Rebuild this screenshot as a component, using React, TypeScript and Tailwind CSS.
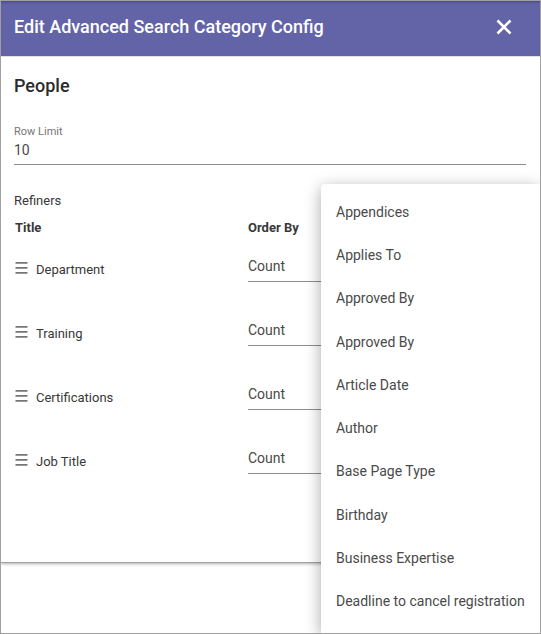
import { useState } from "react";

const refiners = ["Department", "Training", "Certifications", "Job Title"];

const properties = [
  "Appendices",
  "Applies To",
  "Approved By",
  "Approved By",
  "Article Date",
  "Author",
  "Base Page Type",
  "Birthday",
  "Business Expertise",
  "Deadline to cancel registration",
];

function CloseIcon() {
  return (
    <svg viewBox="0 0 24 24" className="size-6" fill="none" stroke="currentColor" strokeWidth="2.600" aria-hidden="true">
      <path d="M5.500 5.500l13 13M18.500 5.500l-13 13" />
    </svg>
  );
}

function DragIcon() {
  return (
    <svg viewBox="0 0 13 12" className="h-3 w-[13px]" fill="currentColor" aria-hidden="true">
      <path d="M.5 0h12v1.700h-12zM.5 5h12v1.700h-12zM.5 10h12v1.700h-12z" />
    </svg>
  );
}

function RefinerRow({ title }: { title: string }) {
  return (
    <tr className="h-16">
      <td className="p-0">
        <div className="flex items-center gap-2 pl-px">
          <button type="button" aria-label={`Move ${title}`} className="pb-1 text-[#757575]">
            <DragIcon />
          </button>
          <span>{title}</span>
        </div>
      </td>
      <td className="p-0 pb-2">
        <select
          aria-label={`Order ${title} by`}
          className="block h-8 w-full appearance-none border-b border-[#8c8c8c] bg-transparent text-sm leading-5 text-[#4a4a4a] outline-none"
        >
          <option>Count</option>
        </select>
      </td>
    </tr>
  );
}

function PropertyMenu() {
  return (
    <ul
      role="listbox"
      aria-label="Properties"
      className="absolute top-[183px] right-0 bottom-0 left-80 flex flex-col rounded-tl bg-white pt-1.5 pb-2.5 shadow-[0_4px_16px_rgba(0,0,0,0.35)]"
    >
      {properties.map((name, index) => (
        <li key={index} role="option" aria-selected="false" className="flex flex-1">
          <button type="button" className="w-full px-[15px] text-left text-sm whitespace-nowrap text-[#4a4a4a]">
            {name}
          </button>
        </li>
      ))}
    </ul>
  );
}

export default function App() {
  const [limit, setLimit] = useState("10");

  return (
    <div className="relative h-screen overflow-hidden border border-[#a0a0a0] bg-white font-[Roboto,sans-serif] text-[13px] leading-5 text-[#383838]">
      <section className="border-b border-[#a0a0a0] pb-17 shadow-[0_1px_3px_rgba(0,0,0,0.3)]">
        <header className="flex h-14 items-center justify-between border-b border-[#e0e0e0] bg-[#6264a7] pr-6 pb-1 pl-[13px] text-white shadow-[inset_0_3px_3px_-2px_rgba(0,0,0,0.3)]">
          <h1 className="text-lg font-medium">Edit Advanced Search Category Config</h1>
          <button type="button" aria-label="Close">
            <CloseIcon />
          </button>
        </header>

        <div className="pt-[15px] pr-3.5 pl-[13px]">
          <h2 className="text-lg leading-7 font-medium text-[#2b2b2b]">People</h2>
          <div className="mt-6 flex flex-col border-b border-[#8c8c8c]">
            <label htmlFor="row-limit" className="text-[11px] leading-4 text-[#757575]">
              Row Limit
            </label>
            <input
              id="row-limit"
              value={limit}
              onChange={(event) => setLimit(event.target.value)}
              className="h-6 w-full bg-transparent pb-1 text-sm text-[#4a4a4a] outline-none"
            />
          </div>

          <h3 className="mt-[26px]">Refiners</h3>
          <table className="mt-[7px] w-full table-fixed border-collapse">
            <thead>
              <tr>
                <th className="w-[234px] p-0 pl-px text-left font-bold">Title</th>
                <th className="p-0 text-left font-bold">Order By</th>
              </tr>
            </thead>
            <tbody>
              {refiners.map((title) => (
                <RefinerRow key={title} title={title} />
              ))}
            </tbody>
          </table>
        </div>
      </section>
      <PropertyMenu />
    </div>
  );
}
